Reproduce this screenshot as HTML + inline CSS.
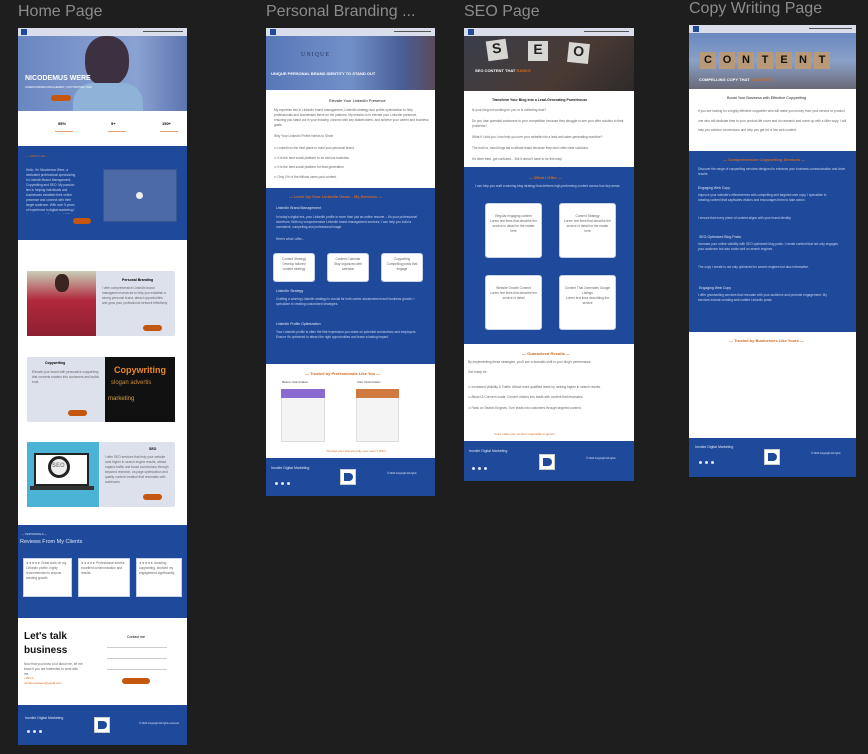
<!DOCTYPE html>
<html><head><meta charset="utf-8"><style>
*{margin:0;padding:0;box-sizing:border-box}
body{width:868px;height:754px;background:#1e1e1e;position:relative;overflow:hidden;font-family:"Liberation Sans",sans-serif}
.a{position:absolute}
.lbl{position:absolute;color:#8c8c8c;font-size:16px;top:3px}
.bl{background:#1f4a9c}
.wh{background:#fff}
.nav{background:#d9deea}
.t{font-size:3.2px;line-height:5px;color:#666;overflow:hidden}
.tw{font-size:3.2px;line-height:5px;color:#c9d4ee;overflow:hidden}
.or{color:#d2691e}
.btn{position:absolute;background:#c4560e;border-radius:4px;height:6px}
.h{font-weight:bold}
.card{position:absolute;background:#fff;border-radius:3px;border:1px solid #c9d3e8}
.foot .t1{position:absolute;color:#dfe6f5;font-size:3.5px}
.logo{position:absolute;background:#fff;width:16px;height:16px;border:1px solid #ccc}
.logo:after{content:"";position:absolute;left:3px;top:3px;width:9px;height:8px;background:#1f4a9c;border-radius:0 5px 5px 0}
.dot{position:absolute;width:3px;height:3px;border-radius:50%;background:#dfe6f5}
.blk{position:absolute;background:#b89a78;font-weight:bold;color:#111;font-size:11px;text-align:center;width:16px;height:17px;line-height:17px}
</style></head><body>

<div class="lbl" style="left:18px">Home Page</div>
<div class="lbl" style="left:266px">Personal Branding ...</div>
<div class="lbl" style="left:464px">SEO Page</div>
<div class="lbl" style="left:689px;top:0">Copy Writing Page</div>

<!-- HOME -->
<div class="a" style="left:18px;top:28px;width:169px;height:717px;background:#fff">
 <div class="a nav" style="left:0;top:0;width:169px;height:8px"></div>
 <div class="a" style="left:3px;top:1px;width:6px;height:6px;background:#1f4a9c"></div>
 <div class="a" style="left:125px;top:3px;width:40px;height:1px;background:#555"></div>
 <div class="a" style="left:0;top:8px;width:169px;height:75px;background:linear-gradient(90deg,#6a86c0,#7d97cc 40%,#8aa2d2 70%,#5d75b0)"></div>
 <div class="a" style="left:67px;top:8px;width:44px;height:50px;border-radius:45%;background:#3d3040"></div>
 <div class="a" style="left:55px;top:55px;width:70px;height:28px;border-radius:20px 20px 0 0;background:#8fb3d8"></div>
 <div class="a h" style="left:7px;top:47px;color:#fff;font-size:7px">NICODEMUS WERE</div>
 <div class="a" style="left:7px;top:58px;color:#fff;font-size:2.5px">LINKEDIN BRAND MANAGEMENT | COPYWRITING | SEO</div>
 <div class="btn" style="left:33px;top:67px;width:20px"></div>
 <div class="a h" style="left:40px;top:93px;font-size:4px">95%</div>
 <div class="a h" style="left:93px;top:93px;font-size:4px">5+</div>
 <div class="a h" style="left:144px;top:93px;font-size:4px">150+</div>
 <div class="a" style="left:37px;top:103px;width:18px;height:1px;background:#e9a070"></div>
 <div class="a" style="left:90px;top:103px;width:18px;height:1px;background:#e9a070"></div>
 <div class="a" style="left:142px;top:103px;width:18px;height:1px;background:#e9a070"></div>
 <div class="a bl" style="left:0;top:118px;width:169px;height:94px"></div>
 <div class="a or" style="left:8px;top:126px;font-size:3px">— ABOUT ME —</div>
 <div class="a tw" style="left:8px;top:140px;width:52px;height:46px">Hello, I'm Nicodemus Were, a dedicated professional specializing in LinkedIn Brand Management, Copywriting and SEO. My passion lies in helping individuals and businesses establish their online presence and connect with their target audience. With over 5 years of experience in digital marketing I have successfully assisted 150+ businesses in achieving remarkable growth and visibility online.</div>
 <div class="btn" style="left:55px;top:190px;width:18px"></div>
 <div class="a" style="left:85px;top:141px;width:74px;height:53px;background:#4c6aa8;border:1px solid #3a5590"></div>
 <div class="a" style="left:118px;top:164px;width:7px;height:7px;border-radius:50%;background:#eee"></div>
 <div class="a or" style="left:55px;top:251px;font-size:2.5px">— AFFORDABLE AND HIGH QUALITY —</div>
 <div class="a" style="left:65px;top:257px;font-size:6px;color:#333">Services I offer</div>
 <div class="a" style="left:9px;top:243px;width:148px;height:65px;background:#dde1ec;border-radius:2px"></div>
 <div class="a" style="left:9px;top:243px;width:69px;height:65px;background:linear-gradient(#c9cfb8,#b2293c 45%,#8e1f30)"></div>
 <div class="a" style="left:37px;top:246px;width:14px;height:18px;border-radius:45%;background:#3a2420"></div>
 <div class="a h" style="left:104px;top:250px;font-size:3.5px">Personal Branding</div>
 <div class="a t" style="left:84px;top:258px;width:66px;height:20px">I offer comprehensive LinkedIn brand management services to help you establish a strong personal brand, attract opportunities and grow your professional network effectively online.</div>
 <div class="btn" style="left:125px;top:297px;width:19px"></div>
 <div class="a" style="left:9px;top:329px;width:148px;height:65px;background:#dde1ec;border-radius:2px"></div>
 <div class="a" style="left:87px;top:329px;width:70px;height:65px;background:#111"></div>
 <div class="a h" style="left:96px;top:337px;font-size:9px;color:#e8892a">Copywriting</div>
 <div class="a" style="left:93px;top:352px;font-size:6px;color:#c98a3a">slogan advertis</div>
 <div class="a" style="left:90px;top:368px;font-size:6px;color:#d8a040">marketing</div>
 <div class="a h" style="left:27px;top:333px;font-size:3.5px">Copywriting</div>
 <div class="a t" style="left:14px;top:342px;width:68px;height:15px">Elevate your brand with persuasive copywriting that converts readers into customers and builds trust.</div>
 <div class="btn" style="left:50px;top:382px;width:19px"></div>
 <div class="a" style="left:9px;top:414px;width:148px;height:65px;background:#dde1ec;border-radius:2px"></div>
 <div class="a" style="left:9px;top:414px;width:72px;height:65px;background:#4bb3d6"></div>
 <div class="a" style="left:16px;top:425px;width:55px;height:33px;background:#fff;border:2px solid #222"></div>
 <div class="a" style="left:12px;top:458px;width:64px;height:4px;background:#333"></div>
 <div class="a" style="left:30px;top:428px;width:22px;height:22px;border-radius:50%;border:3px solid #222;background:#eee"></div>
 <div class="a h" style="left:34px;top:435px;font-size:6px;color:#888">SEO</div>
 <div class="a h" style="left:131px;top:419px;font-size:3.5px">SEO</div>
 <div class="a t" style="left:87px;top:427px;width:66px;height:30px">I offer SEO services that help your website rank higher in search engine results, attract organic traffic and boost conversions through keyword research, on-page optimization and quality content creation that resonates with audiences.</div>
 <div class="btn" style="left:125px;top:466px;width:19px"></div>
 <div class="a bl" style="left:0;top:497px;width:169px;height:93px"></div>
 <div class="a" style="left:4px;top:505px;font-size:2.5px;color:#dfe6f5">— TESTIMONIALS —</div>
 <div class="a" style="left:2px;top:511px;font-size:5.5px;color:#dfe6f5">Reviews From My Clients</div>
 <div class="card" style="left:5px;top:530px;width:49px;height:39px;border-radius:0"><div class="t" style="padding:2px">★★★★★ Great work on my LinkedIn profile, highly recommended to anyone wanting growth.</div></div>
 <div class="card" style="left:60px;top:530px;width:52px;height:39px;border-radius:0"><div class="t" style="padding:2px">★★★★★ Professional service, excellent communication and results.</div></div>
 <div class="card" style="left:118px;top:530px;width:46px;height:39px;border-radius:0"><div class="t" style="padding:2px">★★★★★ Amazing copywriting, boosted my engagement significantly.</div></div>
 <div class="a h" style="left:6px;top:602px;font-size:10px;line-height:14px;color:#111">Let's talk<br>business</div>
 <div class="a t" style="left:6px;top:634px;width:60px">Now that you know a lot about me, let me know if you are interested to work with me.</div>
 <div class="a or" style="left:6px;top:648px;font-size:3px;line-height:5px">+254 0 &nbsp;&nbsp;<br>nicodemuswere@gmail.com</div>
 <div class="a" style="left:109px;top:607px;font-size:3.5px">Contact me</div>
 <div class="a" style="left:89px;top:619px;width:60px;height:1px;background:#ccc"></div>
 <div class="a" style="left:89px;top:630px;width:60px;height:1px;background:#ccc"></div>
 <div class="a" style="left:89px;top:641px;width:60px;height:1px;background:#ccc"></div>
 <div class="btn" style="left:104px;top:650px;width:28px"></div>
 <div class="a bl foot" style="left:0;top:677px;width:169px;height:40px">
  <div class="t1" style="left:7px;top:11px">Inonkle Digital Marketing</div>
  <div class="dot" style="left:9px;top:25px"></div><div class="dot" style="left:15px;top:25px"></div><div class="dot" style="left:21px;top:25px"></div>
  <div class="logo" style="left:76px;top:12px"></div>
  <div class="t1" style="left:121px;top:17px;font-size:2.5px">© 2024 Copyright All rights reserved</div>
 </div>
</div>

<!-- PERSONAL BRANDING -->
<div class="a" style="left:266px;top:28px;width:169px;height:468px;background:#fff">
 <div class="a nav" style="left:0;top:0;width:169px;height:8px"></div>
 <div class="a" style="left:4px;top:1px;width:6px;height:6px;background:#1f4a9c"></div>
 <div class="a" style="left:128px;top:3px;width:37px;height:1px;background:#555"></div>
 <div class="a" style="left:0;top:8px;width:169px;height:54px;background:linear-gradient(90deg,#5877b8,#7290c8 50%,#4a5f98 80%,#5a4a5a)"></div>
 <div class="a" style="left:35px;top:24px;font-size:6px;color:#2a3a5a;font-family:'Liberation Serif',serif;letter-spacing:1px">UNIQUE</div>
 <div class="a h" style="left:5px;top:43px;font-size:4px;color:#fff">UNIQUE PERSONAL BRAND IDENTITY TO STAND OUT</div>
 <div class="a" style="left:63px;top:70px;font-size:4px;color:#222">Elevate Your LinkedIn Presence</div>
 <div class="a t" style="left:8px;top:80px;width:155px;height:20px">My expertise lies in LinkedIn brand management, LinkedIn strategy and profile optimization to help professionals and businesses thrive on the platform. My mission is to elevate your LinkedIn presence, ensuring you stand out in your industry, connect with key stakeholders, and achieve your career and business goals.</div>
 <div class="a t" style="left:8px;top:106px">Why Your LinkedIn Profile Needs to Shine</div>
 <div class="a t" style="left:8px;top:116px;line-height:9.5px">⊙ LinkedIn is the best place to build your personal brand.<br>⊙ It is the best social platform to do serious business.<br>⊙ It is the best social platform for lead generation.<br>⊙ Only 1% of the billions users post content.</div>
 <div class="a bl" style="left:0;top:160px;width:169px;height:176px"></div>
 <div class="a or h" style="left:23px;top:166px;font-size:4px">— Level Up Your LinkedIn Game - My Services —</div>
 <div class="a" style="left:10px;top:178px;font-size:3.5px;color:#dfe6f5">LinkedIn Brand Management</div>
 <div class="a tw" style="left:10px;top:187px;width:150px;height:16px">In today's digital era, your LinkedIn profile is more than just an online resume – it's your professional storefront. With my comprehensive LinkedIn brand management services, I can help you build a consistent, compelling and professional image.</div>
 <div class="a tw" style="left:10px;top:209px">Here's what I offer...</div>
 <div class="card" style="left:7px;top:225px;width:42px;height:29px"><div class="t" style="padding:3px;text-align:center">Content Strategy<br>Develop tailored content strategy</div></div>
 <div class="card" style="left:61px;top:225px;width:42px;height:29px"><div class="t" style="padding:3px;text-align:center">Content Calendar<br>Stay organized with calendar</div></div>
 <div class="card" style="left:115px;top:225px;width:42px;height:29px"><div class="t" style="padding:3px;text-align:center">Copywriting<br>Compelling posts that engage</div></div>
 <div class="a" style="left:10px;top:261px;font-size:3.5px;color:#dfe6f5">LinkedIn Strategy</div>
 <div class="a tw" style="left:10px;top:269px;width:150px;height:15px">Crafting a winning LinkedIn strategy is crucial for both career advancement and business growth. I specialize in creating customized strategies.</div>
 <div class="a" style="left:10px;top:294px;font-size:3.5px;color:#dfe6f5">LinkedIn Profile Optimization</div>
 <div class="a tw" style="left:10px;top:302px;width:150px;height:20px">Your LinkedIn profile is often the first impression you make on potential connections and employers. Ensure it's optimized to attract the right opportunities and leave a lasting impact.</div>
 <div class="a or h" style="left:39px;top:343px;font-size:4px">— Trusted by Professionals Like You —</div>
 <div class="a" style="left:16px;top:352px;font-size:3px;color:#444">Before Optimization</div>
 <div class="a" style="left:91px;top:352px;font-size:3px;color:#444">After Optimization</div>
 <div class="a" style="left:15px;top:361px;width:44px;height:53px;background:#f4f4f4;border:1px solid #ddd"></div>
 <div class="a" style="left:15px;top:361px;width:44px;height:9px;background:#8a6ad0"></div>
 <div class="a" style="left:90px;top:361px;width:43px;height:53px;background:#f4f4f4;border:1px solid #ddd"></div>
 <div class="a" style="left:90px;top:361px;width:43px;height:9px;background:#d07a40"></div>
 <div class="a or" style="left:60px;top:421px;font-size:3px">"It's time your brand is fully your own IT WAY"</div>
 <div class="a bl foot" style="left:0;top:430px;width:169px;height:38px">
  <div class="t1" style="left:5px;top:8px">Inonkle Digital Marketing</div>
  <div class="dot" style="left:9px;top:24px"></div><div class="dot" style="left:15px;top:24px"></div><div class="dot" style="left:21px;top:24px"></div>
  <div class="logo" style="left:74px;top:11px"></div>
  <div class="t1" style="left:121px;top:14px;font-size:2.5px">© 2024 Copyright All rights</div>
 </div>
</div>

<!-- SEO -->
<div class="a" style="left:464px;top:28px;width:170px;height:453px;background:#fff">
 <div class="a nav" style="left:0;top:0;width:170px;height:8px"></div>
 <div class="a" style="left:4px;top:1px;width:6px;height:6px;background:#1f4a9c"></div>
 <div class="a" style="left:120px;top:3px;width:45px;height:1px;background:#555"></div>
 <div class="a" style="left:0;top:8px;width:170px;height:55px;background:linear-gradient(135deg,#3a3e4a,#4a3a34 60%,#2e2a2a)"></div>
 <div class="a h" style="left:23px;top:12px;width:20px;height:20px;background:#d8d6d2;font-size:14px;text-align:center;color:#222;transform:rotate(-8deg)">S</div>
 <div class="a h" style="left:64px;top:13px;width:20px;height:20px;background:#d8d6d2;font-size:14px;text-align:center;color:#222">E</div>
 <div class="a h" style="left:104px;top:15px;width:21px;height:20px;background:#d8d6d2;font-size:14px;text-align:center;color:#222;transform:rotate(6deg)">O</div>
 <div class="a h" style="left:11px;top:40px;font-size:4px;color:#fff">SEO CONTENT THAT <span class="or">RANKS</span></div>
 <div class="a h" style="left:28px;top:70px;font-size:3.5px;color:#222">Transform Your Blog into a Lead-Generating Powerhouse</div>
 <div class="a t" style="left:8px;top:80px;width:155px;line-height:5.4px">Is your blog not working for you or is collecting dust?<br><br>Do you lose potential customers to your competition because they struggle to see your offer solution to their problems?<br><br>What if I told you I can help you turn your website into a lead and sales generating machine?<br><br>The truth is, most blogs fail to attract leads because they don't offer clear solutions.<br><br>It's been tried, got confused... But it doesn't have to be this way!</div>
 <div class="a bl" style="left:0;top:139px;width:170px;height:177px"></div>
 <div class="a or h" style="left:65px;top:147px;font-size:4px">— What I Offer —</div>
 <div class="a tw" style="left:11px;top:156px;width:150px">I can help you craft a winning blog strategy that delivers high-performing content across four key areas.</div>
 <div class="card" style="left:21px;top:175px;width:57px;height:55px"><div class="t" style="padding:10px 3px 0;text-align:center">Regular engaging content<br>Lorem text lines that describe the service in detail for the reader here</div></div>
 <div class="card" style="left:95px;top:175px;width:57px;height:55px"><div class="t" style="padding:10px 3px 0;text-align:center">Content Strategy<br>Lorem text lines that describe the service in detail for the reader here</div></div>
 <div class="card" style="left:21px;top:247px;width:57px;height:55px"><div class="t" style="padding:10px 3px 0;text-align:center">Website Growth Content<br>Lorem text lines that describe the service in detail</div></div>
 <div class="card" style="left:95px;top:247px;width:57px;height:55px"><div class="t" style="padding:10px 3px 0;text-align:center">Content That Generates Google Listings<br>Lorem text lines describing the service</div></div>
 <div class="a or h" style="left:58px;top:323px;font-size:4px">— Guaranteed Results —</div>
 <div class="a t" style="left:4px;top:332px;width:160px;line-height:5.2px">By implementing these strategies, you'll see a dramatic shift in your blog's performance.<br><br>Get ready for:</div>
 <div class="a t" style="left:4px;top:357px;width:160px;line-height:5.2px">⊙ Increased Visibility &amp; Traffic: Attract more qualified leads by ranking higher in search results.<br><br>⊙ Attract &amp; Convert Leads: Convert visitors into leads with content that resonates.<br><br>⊙ Rank on Search Engines: Turn leads into customers through targeted content.</div>
 <div class="a or" style="left:30px;top:404px;font-size:3px">"Let's make your content impossible to ignore"</div>
 <div class="a bl foot" style="left:0;top:413px;width:170px;height:40px">
  <div class="t1" style="left:5px;top:8px">Inonkle Digital Marketing</div>
  <div class="dot" style="left:8px;top:26px"></div><div class="dot" style="left:14px;top:26px"></div><div class="dot" style="left:20px;top:26px"></div>
  <div class="logo" style="left:75px;top:13px"></div>
  <div class="t1" style="left:122px;top:16px;font-size:2.5px">© 2024 Copyright All rights</div>
 </div>
</div>

<!-- COPY -->
<div class="a" style="left:689px;top:25px;width:167px;height:452px;background:#fff">
 <div class="a nav" style="left:0;top:0;width:167px;height:8px"></div>
 <div class="a" style="left:4px;top:1px;width:6px;height:6px;background:#1f4a9c"></div>
 <div class="a" style="left:120px;top:3px;width:43px;height:1px;background:#555"></div>
 <div class="a" style="left:0;top:8px;width:167px;height:56px;background:linear-gradient(#6a88c0,#8aa0c8 50%,#6a6a78)"></div>
 <div class="blk" style="left:11px;top:27px">C</div>
 <div class="blk" style="left:30px;top:27px">O</div>
 <div class="blk" style="left:49px;top:27px">N</div>
 <div class="blk" style="left:68px;top:27px">T</div>
 <div class="blk" style="left:87px;top:27px">E</div>
 <div class="blk" style="left:106px;top:27px">N</div>
 <div class="blk" style="left:125px;top:27px">T</div>
 <div class="a h" style="left:10px;top:52px;font-size:4px;color:#fff">COMPELLING COPY THAT <span class="or">CONVERTS</span></div>
 <div class="a" style="left:38px;top:71px;font-size:3.8px;color:#222">Boost Your Business with Effective Copywriting</div>
 <div class="a t" style="left:9px;top:82px;width:152px;line-height:9.5px">If you are looking for a highly effective copywriter who will make you money from your service or product, one who will dedicate time to your product life cover and do research and come up with a killer copy. I will help you achieve conversions and help you get rid of low web content.</div>
 <div class="a bl" style="left:0;top:126px;width:167px;height:181px"></div>
 <div class="a or h" style="left:34px;top:132px;font-size:4px">— Comprehensive Copywriting Services —</div>
 <div class="a tw" style="left:9px;top:142px;width:150px">Discover the range of copywriting services designed to enhance your business communication and drive results.</div>
 <div class="a" style="left:9px;top:161px;font-size:3.5px;color:#dfe6f5">Engaging Web Copy</div>
 <div class="a tw" style="left:9px;top:168px;width:140px;height:20px">Improve your website's effectiveness with compelling and targeted web copy. I specialize in creating content that captivates visitors and encourages them to take action.</div>
 <div class="a tw" style="left:9px;top:191px;width:140px">I ensure that every piece of content aligns with your brand identity.</div>
 <div class="a" style="left:10px;top:210px;font-size:3.5px;color:#dfe6f5">SEO-Optimized Blog Posts</div>
 <div class="a tw" style="left:9px;top:217px;width:140px;height:20px">Increase your online visibility with SEO-optimized blog posts. I create content that not only engages your audience but also ranks well on search engines.</div>
 <div class="a tw" style="left:9px;top:240px;width:140px">The copy I create is not only optimized for search engines but also informative.</div>
 <div class="a" style="left:10px;top:261px;font-size:3.5px;color:#dfe6f5">Engaging Web Copy</div>
 <div class="a tw" style="left:9px;top:268px;width:140px;height:20px">I offer ghostwriting services that resonate with your audience and promote engagement. My services include creating well-crafted LinkedIn posts.</div>
 <div class="a or h" style="left:40px;top:313px;font-size:4px">— Trusted by Businesses Like Yours —</div>
 <div class="a bl foot" style="left:0;top:413px;width:167px;height:39px">
  <div class="t1" style="left:6px;top:7px">Inonkle Digital Marketing</div>
  <div class="dot" style="left:10px;top:23px"></div><div class="dot" style="left:16px;top:23px"></div><div class="dot" style="left:22px;top:23px"></div>
  <div class="logo" style="left:75px;top:11px"></div>
  <div class="t1" style="left:122px;top:14px;font-size:2.5px">© 2024 Copyright All rights</div>
 </div>
</div>
</body></html>
